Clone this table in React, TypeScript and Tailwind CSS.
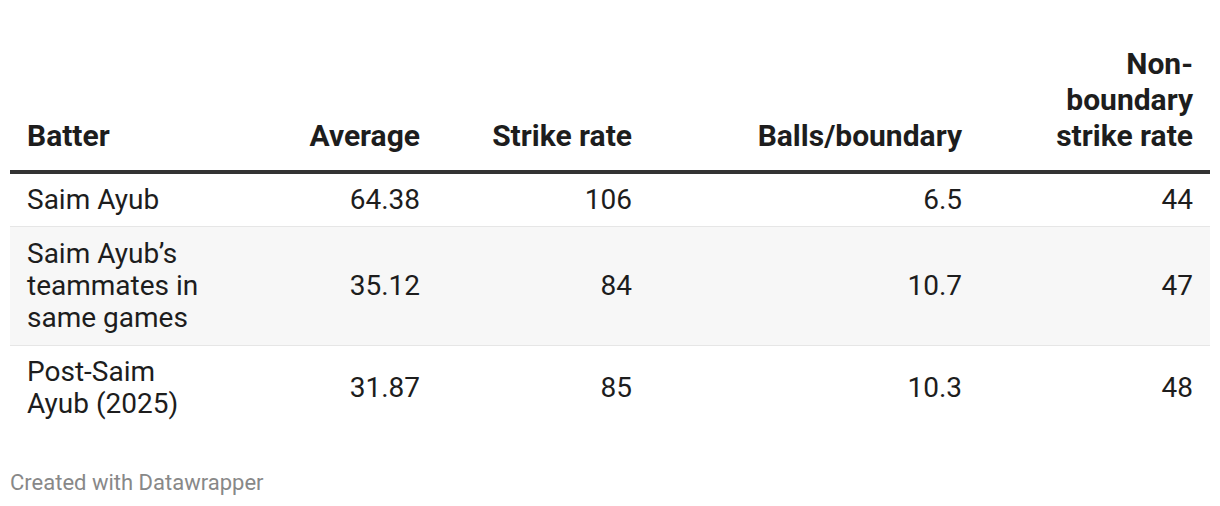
const rows = [
  { name: "Saim Ayub", avg: "64.38", sr: "106", bpb: "6.5", nbsr: "44" },
  {
    name: "Saim Ayub’s teammates in same games",
    avg: "35.12",
    sr: "84",
    bpb: "10.7",
    nbsr: "47",
  },
  { name: "Post-Saim Ayub (2025)", avg: "31.87", sr: "85", bpb: "10.3", nbsr: "48" },
];

const cols = "grid grid-cols-[210px_217px_212px_330px_231px]";

export default function App() {
  return (
    <div className="bg-white w-[1220px] h-[506px] px-[10px] pt-[46px] font-['Roboto',sans-serif] text-[#1d1d1d]">
      <div className={`${cols} items-end border-b-4 border-[#333333] text-[30px] leading-9 font-bold`}>
        <div className="px-[17px] pb-4">Batter</div>
        <div className="px-[17px] pb-4 text-right">Average</div>
        <div className="px-[17px] pb-4 text-right">Strike rate</div>
        <div className="px-[17px] pb-4 text-right">Balls/boundary</div>
        <div className="px-[17px] pb-4 text-right">
          Non-
          <br />
          boundary
          <br />
          strike rate
        </div>
      </div>
      {rows.map((r, i) => {
        const pad = i === 1 ? "py-[11px]" : "py-[10px]";
        return (
          <div
            key={r.name}
            className={`${cols} items-center text-[28px] leading-8 ${
              i === 1 ? "bg-[#f7f7f7]" : ""
            } ${i < rows.length - 1 ? "border-b border-[#e6e6e6]" : ""}`}
          >
            <div className={`px-[17px] ${pad}`}>{r.name}</div>
            <div className={`px-[17px] ${pad} text-right`}>{r.avg}</div>
            <div className={`px-[17px] ${pad} text-right`}>{r.sr}</div>
            <div className={`px-[17px] ${pad} text-right`}>{r.bpb}</div>
            <div className={`px-[17px] ${pad} text-right`}>{r.nbsr}</div>
          </div>
        );
      })}
      <div className="mt-[39px] text-[22px] leading-7 text-[#888888]">Created with Datawrapper</div>
    </div>
  );
}
